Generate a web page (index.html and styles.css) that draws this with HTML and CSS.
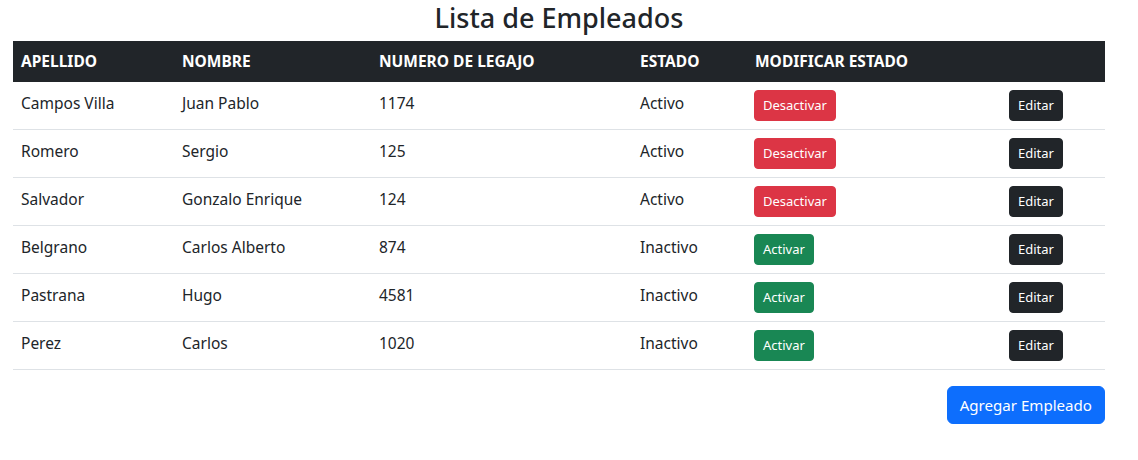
FILE: index.html
```html
<!DOCTYPE html>
<html lang="es">
<head>
<meta charset="utf-8">
<title>Lista de Empleados</title>
<link rel="stylesheet" href="styles.css">
</head>
<body>
<div class="page">
  <h2 class="title">Lista de Empleados</h2>
  <table class="tabla">
    <colgroup>
      <col class="c1"><col class="c2"><col class="c3"><col class="c4"><col class="c5"><col class="c6">
    </colgroup>
    <thead>
      <tr><th>APELLIDO</th><th>NOMBRE</th><th>NUMERO DE LEGAJO</th><th>ESTADO</th><th>MODIFICAR ESTADO</th><th></th></tr>
    </thead>
    <tbody>
      <tr><td>Campos Villa</td><td>Juan Pablo</td><td>1174</td><td>Activo</td><td><button class="btn btn-sm btn-danger shift">Desactivar</button></td><td><button class="btn btn-sm btn-dark">Editar</button></td></tr>
      <tr><td>Romero</td><td>Sergio</td><td>125</td><td>Activo</td><td><button class="btn btn-sm btn-danger shift">Desactivar</button></td><td><button class="btn btn-sm btn-dark">Editar</button></td></tr>
      <tr><td>Salvador</td><td>Gonzalo Enrique</td><td>124</td><td>Activo</td><td><button class="btn btn-sm btn-danger shift">Desactivar</button></td><td><button class="btn btn-sm btn-dark">Editar</button></td></tr>
      <tr><td>Belgrano</td><td>Carlos Alberto</td><td>874</td><td>Inactivo</td><td><button class="btn btn-sm btn-success shift">Activar</button></td><td><button class="btn btn-sm btn-dark">Editar</button></td></tr>
      <tr><td>Pastrana</td><td>Hugo</td><td>4581</td><td>Inactivo</td><td><button class="btn btn-sm btn-success shift">Activar</button></td><td><button class="btn btn-sm btn-dark">Editar</button></td></tr>
      <tr><td>Perez</td><td>Carlos</td><td>1020</td><td>Inactivo</td><td><button class="btn btn-sm btn-success shift">Activar</button></td><td><button class="btn btn-sm btn-dark">Editar</button></td></tr>
    </tbody>
  </table>
  <div class="acciones">
    <button class="btn btn-primary">Agregar Empleado</button>
  </div>
</div>
</body>
</html>
```
FILE: styles.css
```css
* { box-sizing: border-box; }
body {
  margin: 0;
  background: #fff;
  color: #212529;
  font-family: "Noto Sans", "Open Sans", sans-serif;
  font-size: 15.5px;
  line-height: 24px;
}
.page {
  padding: 0 33px 0 13px;
}
.title {
  margin: 0 0 8px;
  height: 33px;
  text-align: center;
  font-size: 27px;
  font-weight: 500;
  line-height: 35px;
}
.tabla {
  width: 100%;
  border-collapse: collapse;
  margin-bottom: 16px;
  table-layout: fixed;
}
.c1 { width: 161px; }
.c2 { width: 197px; }
.c3 { width: 261px; }
.c4 { width: 115px; }
.c5 { width: 254px; }
.c6 { width: 104px; }
.tabla th {
  background: #212529;
  color: #fff;
  font-weight: 700;
  text-align: left;
  padding: 8px 8px 9px;
  height: 41px;
}
.tabla td {
  padding: 9px 8px 7px;
  border-bottom: 1px solid #dee2e6;
  vertical-align: top;
}
.btn {
  font-family: inherit;
  border: 1px solid transparent;
  color: #fff;
  cursor: pointer;
  display: block;
}
.btn-sm {
  font-size: 13px;
  line-height: 21px;
  height: 31px;
  padding: 4px 8px;
  border-radius: 4px;
  margin-top: -1px;
  margin-bottom: 1px;
}
.shift { margin-left: -1px; }
.btn-danger { background: #dc3545; border-color: #dc3545; }
.btn-success { background: #198754; border-color: #198754; }
.btn-dark { background: #212529; border-color: #212529; }
.btn-primary {
  background: #0d6efd;
  border-color: #0d6efd;
  font-size: 15.1px;
  line-height: 24px;
  height: 38px;
  padding: 6px 12px;
  border-radius: 6px;
}
.acciones {
  display: flex;
  justify-content: flex-end;
}
```
